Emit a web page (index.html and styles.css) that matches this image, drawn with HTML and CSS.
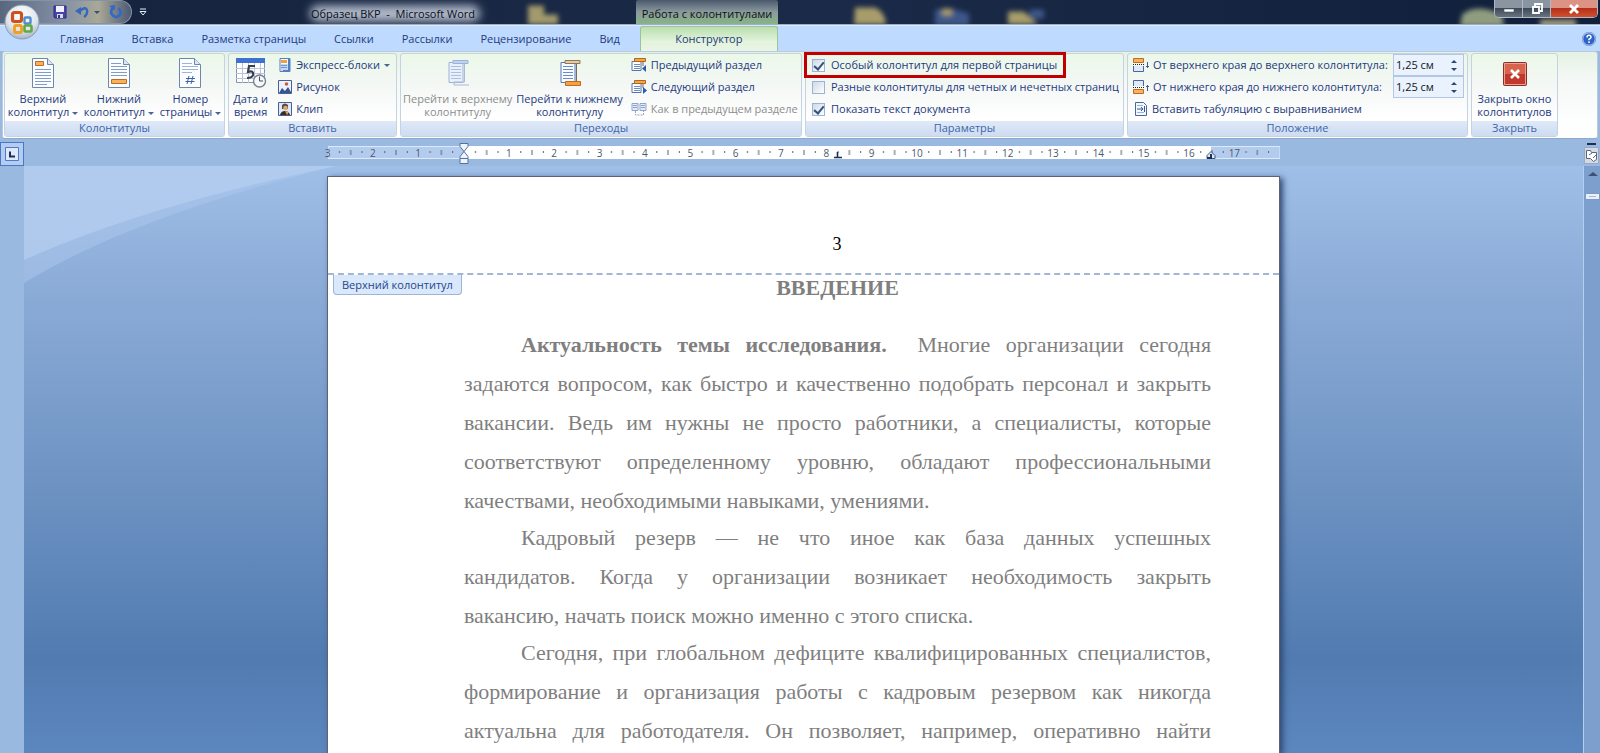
FILE: index.html
```html
<!DOCTYPE html>
<html lang="ru">
<head>
<meta charset="utf-8">
<title>Образец ВКР - Microsoft Word</title>
<link rel="stylesheet" href="styles.css">
</head>
<body>
<div class="app">

<header class="titlebar">
  <svg class="glass" viewBox="0 0 1600 25" preserveAspectRatio="xMaxYMid slice" aria-hidden="true">
    <defs>
      <filter id="soft" x="-30%" y="-60%" width="160%" height="220%"><feGaussianBlur stdDeviation="2.5"/></filter>
      <filter id="glow" x="-30%" y="-100%" width="160%" height="300%"><feGaussianBlur stdDeviation="5"/></filter>
    </defs>
    <g filter="url(#soft)">
      <path d="M528 6h16v9h14v10h-30z" fill="#a39a6c"/>
      <path d="M855 8h20q10 4 11 17h-32z" fill="#a89d6a"/>
      <path d="M935 10h20l14 4v12h-34z" fill="#3c5688"/><path d="M942 9h10v7h-10zM1008 12h16l14 13h-30z" fill="#a89d6a"/>
      <path d="M1030 10h14v9h-14z" fill="#3c5688"/>
      <path d="M1462 15q14-12 40 0l2 12h-44z" fill="#8f9c80"/><path d="M1540 20h36v8h-36z" fill="#a09a7c"/>
    </g>
    <rect x="310" y="6" width="170" height="16" rx="8" fill="#c5cddb" opacity=".9" filter="url(#glow)"/>
  </svg>
  <div class="quick">
    <button aria-label="Сохранить"><svg width="14" height="14" viewBox="0 0 14 14"><path d="M1 1h12v12H2L1 12z" fill="#4a43a8" stroke="#2a2c7c"/><path d="M3 1h8v6H3z" fill="#eef0ff"/><path d="M4 9h6v4H4z" fill="#d5d8ee"/><path d="M5 10h2v3H5z" fill="#33357c"/></svg></button>
    <button aria-label="Отменить"><svg width="26" height="14" viewBox="0 0 26 14"><path d="M5 6q5-5 7-1 1 4-3 7" fill="none" stroke="#3467c0" stroke-width="2.4"/><path d="M0 6l6-4v8z" fill="#3467c0"/><path d="M19 6h6l-3 3z" fill="#35507f"/></svg></button>
    <button aria-label="Вернуть"><svg width="14" height="14" viewBox="0 0 14 14"><path d="M4 3Q0 7 4 10.500t7-1Q13 6 9.500 3.500" fill="none" stroke="#3268c8" stroke-width="2.800"/><path d="M0 1l6-1v5z" fill="#3268c8"/></svg></button>
  </div>
  <button class="more" aria-label="Настройка панели быстрого доступа"><svg width="8" height="8" viewBox="0 0 8 8"><path d="M1 1h6M1 3.500h6L4 7z" fill="none" stroke="#e5ebf5"/></svg></button>
  <h1 class="caption">Образец ВКР&nbsp; - &nbsp;Microsoft Word</h1>
  <div class="context">Работа с колонтитулами</div>
  <div class="window-buttons">
    <button aria-label="Свернуть"><svg width="12" height="12" viewBox="0 0 12 12"><path d="M1 6h10v3H1z" fill="#fff" stroke="#45505e" stroke-width=".6"/></svg></button>
    <button aria-label="Восстановить"><svg width="12" height="12" viewBox="0 0 12 12"><path d="M4 3V1h7v7H9M2 4h6v6H2z" fill="none" stroke="#fff" stroke-width="1.800"/></svg></button>
    <button class="close" aria-label="Закрыть"><svg width="12" height="10" viewBox="0 0 12 10"><path d="M2 1l8 8M10 1L2 9" stroke="#fff" stroke-width="2.800"/></svg></button>
  </div>
</header>

<button class="office" aria-label="Кнопка Office"><svg width="36" height="36" viewBox="0 0 36 36">
  <defs><radialGradient id="orb" cx=".5" cy=".3" r=".75"><stop offset="0" stop-color="#fff"/><stop offset=".6" stop-color="#dfe5ee"/><stop offset="1" stop-color="#9ba9bd"/></radialGradient></defs>
  <circle cx="18" cy="18" r="17" fill="url(#orb)" stroke="#8d9db5"/>
  <g fill="none"><rect x="8.500" y="8.500" width="9" height="9" rx="2" stroke="#d0501c" stroke-width="3.200"/><rect x="20.500" y="13.500" width="6" height="6" rx="1" stroke="#4d8fce" stroke-width="2.400"/><rect x="10.500" y="21.500" width="7" height="7" rx="1.500" stroke="#f0a01e" stroke-width="2.800"/><rect x="20.500" y="21.500" width="7" height="6" rx="1" stroke="#62a844" stroke-width="2.600"/></g></svg></button>

<nav class="tabs">
  <button>Главная</button><button>Вставка</button><button>Разметка страницы</button><button>Ссылки</button><button>Рассылки</button><button>Рецензирование</button><button>Вид</button><button class="active">Конструктор</button>
  <button class="help" aria-label="Справка"><svg width="14" height="14" viewBox="0 0 14 14"><circle cx="7" cy="7" r="6.300" fill="#2d62c8" stroke="#d7e6fb"/><circle cx="7" cy="7" r="6.800" fill="none" stroke="#3b66b0" stroke-width=".5"/><path d="M5 5.500Q5 3.300 7 3.300t2 2Q9 6.400 7 7.300v1M7 9.300V11" fill="none" stroke="#fff" stroke-width="1.500"/></svg></button>
</nav>

<div class="ribbon">
  <section class="group g-headers">
    <div class="body">
      <button class="big"><svg width="24" height="30" viewBox="0 0 24 30"><path d="M1.500.500h15l6 6v23h-21z" fill="#fbfdff" stroke="#6d86b0"/><path d="M16.500.500v6h6" fill="#dbe6f5" stroke="#6d86b0"/><path d="M4 11.500h16M4 14.500h16M4 17.500h16M4 20.500h16M4 23.500h16M4 26.500h12" stroke="#7f9cca"/><path d="M4.500 3.500h8v4h-8z" fill="#f7b25c" stroke="#c06a22"/></svg><span>Верхний<br>колонтитул <i class="arrow"></i></span></button>
      <button class="big"><svg width="24" height="30" viewBox="0 0 24 30"><path d="M1.500.500h15l6 6v23h-21z" fill="#fbfdff" stroke="#6d86b0"/><path d="M16.500.500v6h6" fill="#dbe6f5" stroke="#6d86b0"/><path d="M4 5.500h10M4 8.500h16M4 11.500h16M4 14.500h16M4 17.500h16" stroke="#7f9cca"/><path d="M4.500 21.500h15v4h-15z" fill="#f7b25c" stroke="#c06a22"/></svg><span>Нижний<br>колонтитул <i class="arrow"></i></span></button>
      <button class="big"><svg width="24" height="30" viewBox="0 0 24 30"><path d="M1.500.500h15l6 6v23h-21z" fill="#fbfdff" stroke="#6d86b0"/><path d="M16.500.500v6h6" fill="#dbe6f5" stroke="#6d86b0"/><path d="M4 5.500h10M4 8.500h16M4 11.500h16M4 14.500h10" stroke="#9db4d8"/><path d="M11 18l-2 8M15 18l-2 8M8 20.500h9M7.500 23.500h9" stroke="#3d62a8"/></svg><span>Номер<br>страницы <i class="arrow"></i></span></button>
    </div>
    <h2>Колонтитулы</h2>
  </section>

  <section class="group g-insert">
    <div class="body">
      <button class="big"><svg width="32" height="30" viewBox="0 0 32 30"><path d="M1.500 1.500h28v23h-28z" fill="#fff" stroke="#8294b4"/><path d="M1 0h29v5H1z" fill="#3f72d0"/><path d="M1 10.500h29M1 15.500h29M1 20.500h29M7.500 5v20M13.500 5v20M19.500 5v20M25.500 5v20" stroke="#b8c4da"/><path d="M20 8h-6l-1 6q6-2 5 3-1 3-6 3" fill="none" stroke="#39404d" stroke-width="2.200"/><circle cx="24.500" cy="23" r="6" fill="#f5f7fa" stroke="#78808e" stroke-width="1.400"/><path d="M24.500 18.500V23H28" fill="none" stroke="#444c5a"/></svg><span>Дата и<br>время</span></button>
      <div class="stack">
        <button class="small"><svg width="14" height="14" viewBox="0 0 14 14"><path d="M2 .500h10v13H2z" fill="#f5f9ff" stroke="#5d7db4"/><path d="M3 6h8v7H3z" fill="#c3d6f2"/><path d="M3 2h6v3H3z" fill="#f0a040"/><path d="M3 7.500h6M3 9.500h6" stroke="#6f97d0"/><path d="M10 1h2v12H5v-1h5z" fill="#4f7fc4"/></svg>Экспресс-блоки <i class="arrow"></i></button>
        <button class="small"><svg width="14" height="14" viewBox="0 0 14 14"><path d="M.500.500h13v13H.500z" fill="#eaf3ff" stroke="#4a5f96"/><path d="M1 13l3-5 3 3 3-4 3 5v1z" fill="#38558f"/><circle cx="8.500" cy="4" r="1.800" fill="#c75c3b"/></svg>Рисунок</button>
        <button class="small"><svg width="14" height="14" viewBox="0 0 14 14"><path d="M.500.500h13v13H.500z" fill="#dfe8f8" stroke="#4a5f96"/><path d="M4 3q3-3 6 0v4H4z" fill="#5c4a3c"/><circle cx="7.500" cy="6" r="2.300" fill="#d9a97c"/><path d="M2 13q1-4 5-4t5 4z" fill="#33302e"/><path d="M7 9l2 4 2-3z" fill="#f0a040"/></svg>Клип</button>
      </div>
    </div>
    <h2>Вставить</h2>
  </section>

  <section class="group g-go">
    <div class="body">
      <button class="big" disabled><svg width="24" height="30" viewBox="0 0 24 30"><path d="M3 4.500h14v20H3z" fill="#eaf0fa" stroke="#9db2d8"/><path d="M5 8.500h10M5 11.500h10M5 14.500h10M5 17.500h10M5 20.500h10" stroke="#a9bfe2"/><path d="M18.500 6v18H8v3h15" fill="none" stroke="#a9b9d6"/><path d="M7 2.500h15v3H7z" fill="#c3d2ec" stroke="#9db2d8"/></svg><span>Перейти к верхнему<br>колонтитулу</span></button>
      <button class="big"><svg width="24" height="30" viewBox="0 0 24 30"><path d="M3 4.500h14v20H3z" fill="#f7faff" stroke="#5977b0"/><path d="M5 8.500h10M5 11.500h10M5 14.500h10M5 17.500h10M5 20.500h10" stroke="#6c8cc4"/><path d="M18.500 6v17" stroke="#7a6a5c"/><path d="M7 2.500h15v3H7z" fill="#e9c9a0" stroke="#8c7762"/><path d="M7.500 23.500h15v4h-15z" fill="#f6a23c" stroke="#c06a22"/></svg><span>Перейти к нижнему<br>колонтитулу</span></button>
      <div class="stack">
        <button class="small"><svg width="16" height="16" viewBox="0 0 16 16"><path d="M1 4.500h9v9H1z" fill="#fff" stroke="#5673a8"/><path d="M3 7.500h6M3 9.500h6M3 11.500h6" stroke="#6c8cc4"/><path d="M3.500 1.500h11v3h-11z" fill="#f4a544" stroke="#b5651f"/><path d="M12 5v4" stroke="#7a6a5c"/><path d="M15 8v7l-4-3.500z" fill="#2c5bb0"/></svg>Предыдущий раздел</button>
        <button class="small"><svg width="16" height="16" viewBox="0 0 16 16"><path d="M1 4.500h9v9H1z" fill="#fff" stroke="#5673a8"/><path d="M3 7.500h6M3 9.500h6M3 11.500h6" stroke="#6c8cc4"/><path d="M3.500 1.500h11v3h-11z" fill="#f4a544" stroke="#b5651f"/><path d="M12 5v4" stroke="#7a6a5c"/><path d="M12 8v7l4-3.500z" fill="#2c5bb0"/></svg>Следующий раздел</button>
        <button class="small" disabled><svg width="16" height="16" viewBox="0 0 16 16"><path d="M1 2.500h6v7H1zM9 2.500h6v7H9z" fill="#e4ebf7" stroke="#8fa5cd"/><path d="M2 4.500h4M2 6.500h4M10 4.500h4M10 6.500h4" stroke="#8fa5cd"/><path d="M4.500 10v4h8v-4" fill="none" stroke="#8fa5cd" stroke-dasharray="2 1"/></svg>Как в предыдущем разделе</button>
      </div>
    </div>
    <h2>Переходы</h2>
  </section>

  <section class="group g-options">
    <div class="body">
      <div class="stack checks">
        <label class="marked"><input type="checkbox" checked>Особый колонтитул для первой страницы</label>
        <label><input type="checkbox">Разные колонтитулы для четных и нечетных страниц</label>
        <label><input type="checkbox" checked>Показать текст документа</label>
      </div>
    </div>
    <h2>Параметры</h2>
  </section>

  <section class="group g-position">
    <div class="body">
      <div class="stack">
        <div class="field"><svg width="16" height="14" viewBox="0 0 16 14"><path d="M.500 8v5.500h10V8" fill="#dfe9f8" stroke="#4a669e"/><path d="M.500.500h10v4H.500z" fill="#f7b25c" stroke="#c06a22"/><path d="M0 6.500h12" stroke="#223" stroke-dasharray="1 1"/><path d="M14.500 4v6M13 8.500h3" stroke="#3d5d99"/></svg><label for="top">От верхнего края до верхнего колонтитула:</label><span class="spin"><input id="top" value="1,25 см"><span class="steps"><button aria-label="Больше"></button><button class="down" aria-label="Меньше"></button></span></span></div>
        <div class="field"><svg width="16" height="14" viewBox="0 0 16 14"><path d="M.500 6V.500h10V6" fill="#dfe9f8" stroke="#4a669e"/><path d="M.500 9.500h10v4H.500z" fill="#f7b25c" stroke="#c06a22"/><path d="M0 7.500h12" stroke="#223" stroke-dasharray="1 1"/><path d="M14.500 5v6M13 6.500h3" stroke="#3d5d99"/></svg><label for="bottom">От нижнего края до нижнего колонтитула:</label><span class="spin"><input id="bottom" value="1,25 см"><span class="steps"><button aria-label="Больше"></button><button class="down" aria-label="Меньше"></button></span></span></div>
        <button class="small"><svg width="14" height="14" viewBox="0 0 14 14"><path d="M1.500.500h8l3 3v10h-11z" fill="#f3f8ff" stroke="#4a669e"/><path d="M3 3.500h6M3 10.500h7" stroke="#9ab3da"/><path d="M3 7h6M7 5l2 2-2 2M10.500 4v6" fill="none" stroke="#34579c"/></svg>Вставить табуляцию с выравниванием</button>
      </div>
    </div>
    <h2>Положение</h2>
  </section>

  <section class="group g-close">
    <div class="body">
      <button class="big"><svg width="24" height="30" viewBox="0 0 24 30"><rect x=".500" y="4.500" width="23" height="23" rx="1" fill="#d9644e" stroke="#8a2f26"/><path d="M1 16h22v11H1z" fill="#c0392b"/><path d="M1.500 5.500h21v21h-21z" fill="none" stroke="#eaa296"/><path d="M8 12l8 8M16 12l-8 8" stroke="#fff" stroke-width="2.600"/></svg><span>Закрыть окно<br>колонтитулов</span></button>
    </div>
    <h2>Закрыть</h2>
  </section>
</div>

<div class="ruler-row">
  <button class="tab-kind" aria-label="Тип табуляции"><svg width="14" height="14" viewBox="0 0 14 14"><path d="M.500.500h13v13H.500z" fill="#dde9fa" stroke="#5478c4"/><path d="M5 4.500v5h5" fill="none" stroke="#1d2f55" stroke-width="2"/></svg></button>
  <div class="ruler">
    <svg class="ticks" viewBox="0 0 952 22" aria-hidden="true">
      <defs><pattern id="cm" x="0" y="0" width="45.330" height="22" patternUnits="userSpaceOnUse"><path d="M11.500 9v2M34 9v2" stroke="#55617a"/><path d="M22.700 8v5" stroke="#55617a"/></pattern></defs>
      <path d="M0 4.500h952v12H0z" fill="#b3ccee" stroke="#dce9fa"/>
      <path d="M136 4h747v13H136z" fill="#fff"/>
      <path d="M0 0h942v22H0z" fill="url(#cm)"/>
      <path d="M132 1.500h8v3l-4 5 4 5v2h-8v-2l4-5-4-5zM132 16.500h8v5h-8z" fill="#edf4fd" stroke="#57709c"/>
      <path d="M509.500 10v6M506 15.500h8" fill="none" stroke="#1d2f55" stroke-width="1.600"/>
      <path d="M879 16.500v-3l4-4 4 4v3z" fill="#dce8f8" stroke="#3c5480"/><path d="M883 12v4h-4" fill="none" stroke="#1d2f55" stroke-width="2"/>
    </svg>
    <div class="numbers"><span>3</span><span>2</span><span>1</span><span></span><span>1</span><span>2</span><span>3</span><span>4</span><span>5</span><span>6</span><span>7</span><span>8</span><span>9</span><span>10</span><span>11</span><span>12</span><span>13</span><span>14</span><span>15</span><span>16</span><span>17</span></div>
  </div>
  <div class="corner">
    <button aria-label="Линейка"><svg width="15" height="21" viewBox="0 0 15 21"><path d="M3 1h9" stroke="#1d2f55" stroke-width="2"/><path d="M.500 4.500h14v16H.500z" fill="#d3dae6" stroke="#9aa9c2"/><path d="M2.500 7.500h4l1 2h5v7l-3 2-3-3h-4z" fill="#fff" stroke="#59677f"/><path d="M5 12l3-2M9 15l3-3" stroke="#59677f"/></svg></button>
  </div>
</div>

<main class="workspace">
  <div class="v-ruler"></div>
  <div class="canvas">
    <svg class="swoosh" width="312" height="118" viewBox="0 0 312 118" aria-hidden="true"><path d="M0 0h312Q110 50 0 117z" fill="#b0caee" opacity=".45"/><path d="M0 0h312Q120 40 0 94z" fill="#b4ceef" opacity=".75"/></svg>
    <article class="page">
      <header class="page-header"><p>3</p><span class="tag">Верхний колонтитул</span></header>
      <div class="text">
        <h3>ВВЕДЕНИЕ</h3>
        <p><b>Актуальность темы исследования.</b>&nbsp; Многие организации сегодня задаются вопросом, как быстро и качественно подобрать персонал и закрыть вакансии. Ведь им нужны не просто работники, а специалисты, которые соответствуют определенному уровню, обладают профессиональными качествами, необходимыми навыками, умениями.</p>
        <p>Кадровый резерв — не что иное как база данных успешных кандидатов.&nbsp;Когда у организации возникает необходимость закрыть вакансию,&nbsp;начать&nbsp;поиск можно именно с этого списка.</p>
        <p class="cut">Сегодня, при глобальном дефиците квалифицированных специалистов, формирование и организация работы с кадровым резервом как никогда актуальна для работодателя. Он позволяет, например, оперативно найти</p>
      </div>
    </article>
  </div>
  <div class="scrollbar"><svg width="15" height="40" viewBox="0 0 15 40" aria-hidden="true"><path d="M3 10l5-4 5 4z" fill="#3f5077"/><rect x=".500" y="27.500" width="14" height="6" fill="#e8f0fb" stroke="#8099c2"/><path d="M4 30.500h7" stroke="#a9bbd8"/></svg></div>
</main>
</div>
</body>
</html>
```
FILE: styles.css
```css
* { box-sizing: border-box; }
body { margin: 0; font: 11px/14px "Open Sans", "Noto Sans", sans-serif; color: #1e3a80; }
h1, h2, h3, p { margin: 0; font-weight: normal; font-size: inherit; }
button { font: inherit; color: inherit; background: none; border: 0; padding: 0; margin: 0; }
svg { display: block; flex: none; }

.app { position: relative; display: flex; flex-direction: column; height: 100vh; overflow: hidden; background: #9ab9e1; }

/* title bar */
.titlebar { position: relative; display: flex; height: 25px; flex: none; background: linear-gradient(90deg, #33425c 0, #16243f 130px, #1b2a48 50%, #10203b 100%); border-bottom: 1px solid #9fb0c6; }
.glass { position: absolute; inset: 0; width: 100%; height: 24px; }
.titlebar > :not(.glass) { position: relative; }
.quick { display: flex; align-items: center; gap: 8px; height: 24px; width: 132px; padding-left: 53px; border-radius: 0 12px 12px 0; border: 1px solid #8593a9; border-left: 0; background: linear-gradient(90deg, #59677e, #8591a5 50%, #aaa995 75%, #4c5a73); }
.more { width: 22px; display: flex; align-items: center; justify-content: center; }
.caption { width: 482px; padding: 6px 0 0 157px; color: #0a0f18; line-height: 16px; white-space: nowrap; }
.context { width: 142px; padding-top: 6px; line-height: 16px; text-align: center; color: #0b120e; white-space: nowrap; background: linear-gradient(#4a586d, #8b9a9d 50%, #86b486); border-radius: 2px 2px 0 0; }
.window-buttons { display: flex; height: 18px; margin: 0 2px 0 auto; border: 1px solid #aeb8c6; border-top: 0; border-radius: 0 0 5px 5px; overflow: hidden; }
.window-buttons button { width: 28px; display: flex; align-items: center; justify-content: center; background: linear-gradient(#8b95a1 45%, #3e4a59 50%, #68737f); border-right: 1px solid #aeb8c6; }
.window-buttons .close { width: 46px; border: 0; background: linear-gradient(#dc9384 45%, #b5301a 50%, #d0512f); }
.office { position: absolute; left: 4px; top: 4px; z-index: 2; }

/* tabs */
.tabs { display: flex; height: 26px; flex: none; padding-left: 46px; background: #bfdaff; border-top: 1px solid #d9e8fb; }
.tabs button { padding: 0 14px; height: 25px; }
.tabs .active { width: 138px; margin-left: 6px; background: linear-gradient(#b9dfae, #e3f3dc 60%, #e9f5e6); border: 1px solid #9cc39a; border-bottom: 0; border-radius: 3px 3px 0 0; }
.tabs .help { margin-left: auto; padding: 0 4px; }

/* ribbon */
.ribbon { display: flex; gap: 3px; flex: none; height: 88px; margin: 0 2px; padding: 1px; background: linear-gradient(#e4f2e3, #f4f8f5 30%, #fcfdfd 75%, #fff); border: 1px solid #b9cadb; border-bottom-color: #8ea9cc; border-radius: 3px; }
.group { display: flex; flex-direction: column; flex: none; border: 1px solid #c4d2e2; border-radius: 3px; background: linear-gradient(#ebf8e9, #f3f7f4 35%, #fff 80%); }
.body { display: flex; flex: 1; min-height: 0; }
.group h2 { height: 15px; flex: none; text-align: center; color: #3e65a8; background: linear-gradient(#dfe9f8, #cddcf1); }
.g-headers { width: 221px; }
.g-insert { width: 169px; }
.g-go { width: 402px; }
.g-options { width: 319px; }
.g-position { width: 341px; }
.g-close { width: 87px; }

.big { display: flex; flex-direction: column; align-items: center; gap: 4px; padding: 4px 2px 0; line-height: 13px; white-space: nowrap; flex: 1 1 auto; }
.stack { display: flex; flex-direction: column; flex: none; }
.small, .field, .checks label { display: flex; align-items: center; height: 22px; gap: 4px; white-space: nowrap; }
.small { padding: 0 6px; }
.arrow { display: inline-block; border: 3px solid transparent; border-top-color: #4a6596; border-bottom: 0; vertical-align: middle; }
button:disabled { color: #8d8d8d; }

.checks label { padding: 0 7px 0 6px; gap: 6px; }
.checks input { appearance: none; width: 13px; height: 13px; margin: 0; border: 1px solid #9bb4d6; background: linear-gradient(135deg, #cfd9e6, #fff); display: grid; place-items: center; }
.checks input:checked::before { content: ""; width: 4px; height: 8px; border: solid #33507f; border-width: 0 2px 2px 0; transform: rotate(40deg); margin-bottom: 2px; }
.checks .marked { align-self: flex-start; outline: 3px solid #c00000; outline-offset: -1px; }

.field { gap: 4px; padding-left: 5px; }
.field label { flex: 1; }
.g-position .stack { flex: 1; padding-right: 3px; }
.spin { display: flex; width: 71px; height: 22px; background: #e9f2fd; border: 1px solid #b0c7e6; }
.spin input { flex: 1; width: 0; border: 0; background: none; padding: 0 2px; font: inherit; color: #10151f; }
.steps { display: flex; flex-direction: column; width: 12px; justify-content: center; gap: 5px; }
.steps button { width: 0; border: 3px solid transparent; border-bottom-color: #2c4677; border-top: 0; }
.steps .down { border-bottom: 0; border-top: 3px solid #2c4677; }

/* horizontal ruler */
.ruler-row { display: flex; flex: none; height: 27px; background: #9ab9e1; }
.tab-kind { width: 24px; height: 24px; margin-top: 3px; display: grid; place-items: center; border: 1px solid #4d77c4; background: #b2cdf1; }
.ruler { position: relative; width: 952px; margin: 3px auto 0; }
.ticks { width: 100%; height: 22px; }
.numbers { position: absolute; inset: 5px 45px auto 0; display: flex; justify-content: space-between; font-size: 10px; line-height: 12px; color: #4c586e; }
.numbers span { width: 0; display: flex; justify-content: center; }
.corner { width: 17px; padding: 4px 1px 0; }

/* document */
.workspace { display: flex; flex: 1; min-height: 0; }
.v-ruler { width: 24px; background: #9ab9e1; }
.canvas { position: relative; flex: 1; display: flex; justify-content: center; align-items: stretch; padding-top: 10px; background: linear-gradient(#9fbfe8, #8aaad6 23%, #6b91c1 57%, #517bb1 84%, #5c87be); overflow: hidden; }
.swoosh { position: absolute; left: 0; top: 0; }
.page { position: relative; width: 953px; background: #fff; border: 1px solid #5d6470; border-bottom: 0; box-shadow: 3px 2px 6px #2f4a73; font-family: "Liberation Serif", serif; color: #7f7f7f; }
.page-header { position: relative; height: 98px; padding-top: 57px; border-bottom: 2px dashed #a4b6d6; text-align: center; }
.page-header p { font-size: 18px; line-height: 20px; padding-left: 67px; color: #000; }
.tag { position: absolute; left: 5px; top: 98px; height: 20px; padding: 0 8px; font: 11px/20px "Open Sans", sans-serif; color: #24468c; background: #d9e8fa; border: 1px solid #9db5d9; border-top: 0; border-radius: 0 0 4px 4px; }
.text { padding: 0 68px 0 136px; font-size: 22px; line-height: 39px; text-align: justify; }
.text h3 { font-size: 22px; line-height: 26px; font-weight: bold; text-align: center; margin-bottom: 24px; }
.text p { text-indent: 57px; }
.text p + p { margin-top: -2px; }
.text .cut { text-align-last: justify; }
.scrollbar { width: 17px; padding: 0 1px; background: #7d9fcd; border-left: 1px solid #b5cff0; }
```
